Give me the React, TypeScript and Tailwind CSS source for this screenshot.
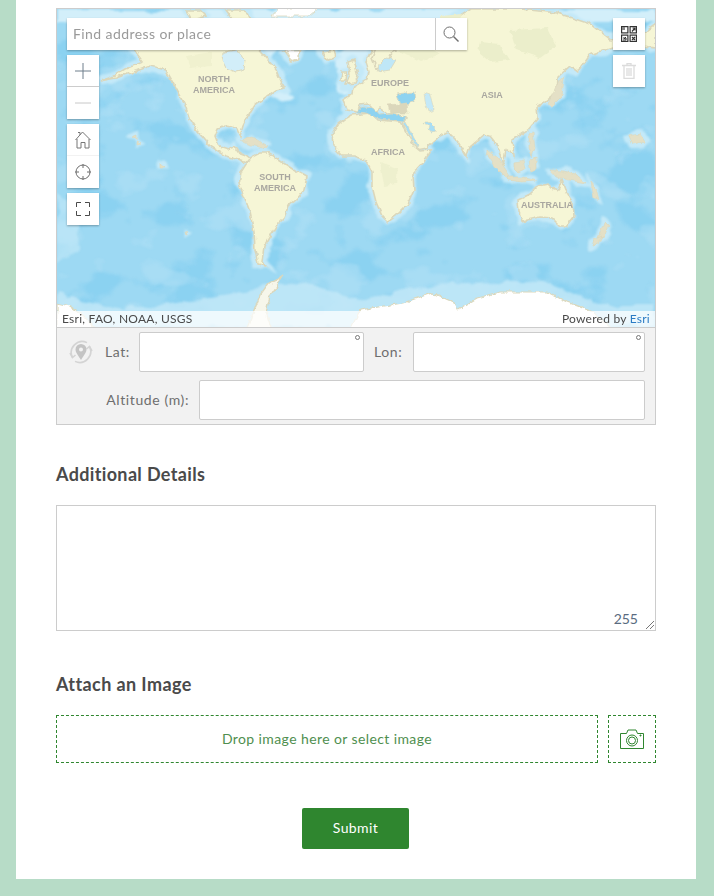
const LAND = "#f6f6d6"
const COAST = "#dbd7bb"
const SHELF = "#c4e9f8"

const continents = [
  // north america
  "M100 81 L112 77 L125 69 L143 62 L134 50 L150 38 L178 32 L186 22 L200 16 L214 30 L232 32 L246 38 L258 48 L268 60 L276 70 L280 80 L285 88 L276 90 L266 97 L254 106 L248 116 L243 126 L240 136 L236 127 L226 125 L218 128 L215 136 L219 146 L228 149 L234 146 L238 152 L246 155 L252 160 L246 163 L238 160 L226 156 L210 146 L198 132 L189 117 L184 102 L174 84 L166 70 L150 66 L134 72 L116 78 Z",
  // south america
  "M250 158 L260 153 L268 153 L282 162 L294 170 L307 177 L304 190 L298 198 L288 207 L284 218 L276 226 L270 236 L264 246 L262 262 L266 266 L258 264 L255 250 L254 232 L250 212 L244 196 L239 184 L241 172 Z",
  // eurasia
  "M343 100 L352 94 L353 88 L367 80 L369 72 L366 62 L372 50 L390 44 L410 40 L426 34 L440 30 L462 14 L470 9 L520 9 L557 13 L590 24 L610 40 L640 36 L656 24 L656 48 L630 44 L613 47 L590 55 L578 72 L570 66 L558 77 L557 93 L545 102 L537 107 L538 118 L528 130 L512 140 L514 156 L506 150 L503 166 L498 146 L490 136 L484 135 L470 147 L467 157 L458 142 L448 132 L440 136 L426 148 L416 150 L408 136 L403 124 L406 118 L396 114 L387 113 L380 108 L376 112 L368 104 L360 105 L358 112 L346 110 Z",
  // africa
  "M345 119 L352 115 L370 113 L378 120 L400 122 L404 128 L414 146 L420 151 L431 150 L424 162 L413 174 L414 190 L408 204 L396 216 L388 222 L382 216 L376 202 L372 186 L372 172 L366 160 L354 156 L342 156 L333 146 L332 134 L338 124 Z",
  // australia
  "M518 200 L530 194 L538 186 L548 184 L552 188 L558 190 L562 180 L566 192 L573 203 L574 216 L566 226 L560 226 L552 218 L540 217 L522 221 L519 212 Z",
  // greenland tip and arctic islands
  "M284 52 L300 50 L297 60 L291 62 Z",
  "M186 10 L200 10 L206 16 L192 20 Z",
  "M226 10 L244 10 L252 22 L238 26 Z",
  // uk and ireland
  "M348 62 L354 60 L358 76 L355 83 L346 84 L350 74 Z",
  "M342 72 L347 72 L346 80 L341 80 Z",
  // iceland
  "M322 52 L334 50 L336 56 L326 60 Z",
  // scandinavia
  "M376 48 L396 40 L404 46 L392 52 L386 66 L376 68 L372 58 Z",
]

const islands = [
  "M488 150 L498 158 L510 176 L505 177 L494 166 L487 156 Z",
  "M507 177 L522 177 L537 181 L522 182 L508 180 Z",
  "M514 162 L523 160 L525 169 L518 172 L514 168 Z",
  "M529 134 L533 132 L535 148 L532 157 L529 148 Z",
  "M529 161 L536 157 L536 169 L531 171 Z",
  "M550 170 L564 171 L578 176 L586 183 L574 181 L556 177 Z",
  "M558 82 L564 78 L562 96 L552 106 L548 104 Z",
  "M591 182 L596 188 L599 200 L594 198 Z",
  "M604 222 L608 226 L604 236 L598 238 Z",
  "M594 240 L602 236 L598 244 L592 246 Z",
  "M628 136 L640 134 L645 142 L632 144 Z",
  "M388 105 L407 103 L408 113 L390 113 Z",
  "M131 137 L136 135 L136 140 Z",
  "M137 141 L141 143 L137 144 Z",
  "M160 164 L165 168 L160 168 Z",
  "M240 140 L252 137 L268 146 L262 148 L248 144 Z",
  "M185 232 L189 233 L186 235 Z",
]

function WorldMap() {
  return (
    <svg viewBox="57 9 598 318" className="block w-full h-[318px]" preserveAspectRatio="none">
      <defs>
        <filter id="rough" x="0" y="0" width="100%" height="100%" colorInterpolationFilters="sRGB">
          <feTurbulence type="fractalNoise" baseFrequency="0.14" numOctaves="3" seed="7" />
          <feDisplacementMap in="SourceGraphic" scale="5" xChannelSelector="R" yChannelSelector="G" />
          <feGaussianBlur stdDeviation="0.35" />
        </filter>
        <filter id="shelf" x="0" y="0" width="100%" height="100%" colorInterpolationFilters="sRGB">
          <feTurbulence type="fractalNoise" baseFrequency="0.05" numOctaves="3" seed="3" />
          <feDisplacementMap in="SourceGraphic" scale="12" xChannelSelector="R" yChannelSelector="G" />
          <feGaussianBlur stdDeviation="1.2" />
        </filter>
        <filter id="deep" x="0" y="0" width="100%" height="100%" colorInterpolationFilters="sRGB">
          <feTurbulence type="fractalNoise" baseFrequency="0.018 0.026" numOctaves="4" seed="11" />
          <feColorMatrix values="0 0 0 0 0.53 0 0 0 0 0.81 0 0 0 0 0.94 6 0 0 0 -3.1" />
          <feComponentTransfer>
            <feFuncA type="discrete" tableValues="0 0.3 0.55 0.8" />
          </feComponentTransfer>
          <feGaussianBlur stdDeviation="0.8" />
        </filter>
        <filter id="pale" x="0" y="0" width="100%" height="100%" colorInterpolationFilters="sRGB">
          <feTurbulence type="fractalNoise" baseFrequency="0.022 0.03" numOctaves="4" seed="23" />
          <feColorMatrix values="0 0 0 0 0.71 0 0 0 0 0.89 0 0 0 0 0.97 6 0 0 0 -3.3" />
          <feComponentTransfer>
            <feFuncA type="discrete" tableValues="0 0.25 0.45" />
          </feComponentTransfer>
          <feGaussianBlur stdDeviation="0.8" />
        </filter>
      </defs>
      <rect x="57" y="9" width="598" height="318" fill="#9dd9f3" />
      <rect x="57" y="9" width="598" height="318" filter="url(#deep)" />
      <rect x="57" y="9" width="598" height="318" filter="url(#pale)" />

      {/* pale water near the poles and around the land */}
      <g filter="url(#shelf)">
        <path d="M57 9 H656 V22 H300 L270 60 L240 24 H57 Z" fill="#d3effa" />
        <path d="M57 190 L80 215 L78 250 L57 262 Z" fill={SHELF} opacity="0.6" />
        <path d="M57 295 L120 310 L200 300 L250 290 L290 282 L360 300 L430 284 L500 282 L550 282 L600 305 L656 305 V327 H57 Z" fill={SHELF} opacity="0.8" />
        <path d="M280 84 L294 98 L278 100 L268 92 Z" fill="#d3effa" />
        <path d="M356 44 L372 44 L370 80 L352 92 L338 90 L336 56 Z" fill="#d3effa" />
        {continents.map((d, i) => (
          <path key={i} d={d} fill={SHELF} stroke={SHELF} strokeWidth="7" />
        ))}
        {islands.map((d, i) => (
          <path key={i} d={d} fill={SHELF} stroke={SHELF} strokeWidth="5" />
        ))}
      </g>

      <g filter="url(#rough)">
        {continents.map((d, i) => (
          <path key={i} d={d} fill={LAND} stroke={COAST} strokeWidth="1.6" />
        ))}
        {/* hudson bay */}
        <path d="M223 52 L236 50 L245 60 L244 70 L236 72 L226 68 L222 60 Z" fill="#d2eef9" stroke={COAST} />
        {/* inland seas */}
        <path d="M356 112 L362 107 L374 108 L380 115 L392 114 L404 116 L404 122 L380 119 L366 113 Z" fill="#8ed3f1" stroke={COAST} strokeWidth="0.8" />
        <path d="M396 94 L414 92 L415 102 L400 105 Z" fill="#8ed3f1" stroke={COAST} strokeWidth="0.8" />
        <path d="M424 92 L430 94 L434 110 L428 112 L425 102 Z" fill="#c4e9f8" stroke={COAST} strokeWidth="0.6" />
        <path d="M386 58 L396 60 L390 70 L378 72 L380 64 Z" fill="#bfe7f7" stroke={COAST} strokeWidth="0.8" />
        <path d="M404 124 L406 122 L418 146 L416 147 Z" fill="#a9def4" stroke={COAST} strokeWidth="0.6" />
        <path d="M424 122 L428 122 L437 131 L432 132 Z" fill="#a9def4" stroke={COAST} strokeWidth="0.6" />
        {/* greener land */}
        <path d="M480 42 L500 44 L510 60 L490 62 L478 52 Z" fill="#ebeecb" />
        <path d="M510 30 L548 28 L556 46 L540 58 L516 50 Z" fill="#ebeecb" />
        <path d="M395 48 L420 44 L440 54 L420 62 Z" fill="#eef0ce" />
        <path d="M440 16 L462 14 L456 28 L440 28 Z" fill="#ebeecb" />
        <path d="M186 56 L212 52 L212 66 L190 68 Z" fill="#f0f1cf" />
        <path d="M380 162 L398 168 L396 184 L384 186 Z" fill="#eef0ce" />
        {islands.map((d, i) => (
          <path key={i} d={d} fill={i === 11 ? COAST : "#e4e0c6"} stroke={COAST} strokeWidth="0.6" />
        ))}
        {/* greenland */}
        <path d="M278 8 L320 8 L310 16 L272 16 Z" fill="#ffffff" stroke={COAST} strokeWidth="0.8" />
        <path d="M285 50 L300 50 L297 59 L291 61 Z" fill="#ffffff" stroke={COAST} strokeWidth="0.8" />
        {/* antarctica */}
        <path d="M283 277 L268 284 L260 295 L254 311 L246 330 L272 330 L266 312 L270 296 Z" fill="#f6f6ea" stroke={COAST} strokeWidth="1.4" />
        <path d="M350 330 L360 310 L403 303 L432 293 L453 302 L457 310 L477 298 L500 292 L547 292 L567 302 L593 312 L612 330 Z" fill="#ffffff" stroke={COAST} strokeWidth="1.2" />
        <path d="M57 303 L70 306 L84 316 L96 330 L57 330 Z" fill="#ffffff" stroke={COAST} strokeWidth="1.2" />
      </g>

      <g className="font-['Liberation_Sans',sans-serif] font-bold" fill="#a9a7a0" fontSize="9" textAnchor="middle">
        <text x="214" y="82">NORTH</text>
        <text x="214" y="93">AMERICA</text>
        <text x="275" y="180">SOUTH</text>
        <text x="275" y="191">AMERICA</text>
        <text x="390" y="86">EUROPE</text>
        <text x="492" y="98">ASIA</text>
        <text x="388" y="155">AFRICA</text>
        <text x="547" y="208">AUSTRALIA</text>
      </g>
    </svg>
  )
}

function MapButton({ children, className = "" }: { children: React.ReactNode; className?: string }) {
  return <div className={`w-8 h-8 bg-white flex items-center justify-center ${className}`}>{children}</div>
}

function MapControls() {
  return (
    <>
      <div className="absolute left-[10px] top-[9px] flex h-8 w-[400px] bg-white shadow-[0_1px_2px_rgba(0,0,0,0.3)]">
        <div className="flex-1 pl-[6px] text-[14px] leading-8 tracking-[0.42px] text-[#9a9a9a]">Find address or place</div>
        <div className="w-8 flex items-center justify-center border-l border-[#ccc]">
          <svg width="16" height="16" viewBox="0 0 16 16" fill="none" stroke="#6e6e6e" className="mr-[2px]">
            <circle cx="6.5" cy="6.5" r="5.5" />
            <path d="M10.5 10.5 L15.5 15.5" strokeWidth="1.4" />
          </svg>
        </div>
      </div>

      <div className="absolute left-[10px] top-[46px] flex flex-col gap-[5px]">
        <div className="shadow-[0_1px_2px_rgba(0,0,0,0.3)]">
          <MapButton className="border-b border-[#ccc]">
            <svg width="16" height="16" viewBox="0 0 16 16" stroke="#6e7f8c">
              <path d="M0 8 H16 M8 0 V16" />
            </svg>
          </MapButton>
          <MapButton>
            <svg width="16" height="16" viewBox="0 0 16 16" stroke="#c8c8c8">
              <path d="M0 8 H16" />
            </svg>
          </MapButton>
        </div>
        <div className="shadow-[0_1px_2px_rgba(0,0,0,0.3)]">
          <MapButton className="border-b border-[#f2f2f2]">
            <svg width="16" height="18" viewBox="0 0 16 18" fill="none" stroke="#777">
              <path d="M0.5 9 L7.5 1 L15.5 9 M3 1.5 H5 V4 M2 8 V17 H6 V11.5 H10 V17 H14 V8" />
            </svg>
          </MapButton>
          <MapButton>
            <svg width="16" height="16" viewBox="0 0 16 16" fill="none" stroke="#6e6e6e">
              <circle cx="8" cy="8" r="7" />
              <path d="M8 0 V4 M8 12 V16 M0 8 H4 M12 8 H16" />
            </svg>
          </MapButton>
        </div>
        <div className="shadow-[0_1px_2px_rgba(0,0,0,0.3)]">
          <MapButton>
            <svg width="14" height="14" viewBox="0 0 14 14" fill="none" stroke="#4a4a4a">
              <path d="M0.5 5 V0.5 H5 M9 0.5 H13.5 V5 M13.5 9 V13.5 H9 M5 13.5 H0.5 V9" />
            </svg>
          </MapButton>
        </div>
      </div>

      <div className="absolute right-[10px] top-[9px] flex flex-col gap-[5px]">
        <MapButton className="shadow-[0_1px_2px_rgba(0,0,0,0.3)]">
          <svg width="16" height="16" viewBox="0 0 16 16" fill="none" stroke="#333" strokeWidth="1.2">
            <rect x="0.6" y="0.6" width="6.3" height="6.3" />
            <rect x="9.1" y="0.6" width="6.3" height="6.3" />
            <rect x="0.6" y="9.1" width="6.3" height="6.3" />
            <rect x="9.1" y="9.1" width="6.3" height="6.3" />
            <path d="M1 1 H4 V4 H1 Z" fill="#888" stroke="none" />
            <path d="M11 5.5 L14 2 M11.5 2 H14 V4.5" />
            <path d="M2 12 H5 V14 H2 M5 11 L3 13" strokeWidth="1" />
            <path d="M11 11 L14 14 M14 11 L11 14" />
          </svg>
        </MapButton>
        <MapButton className="shadow-[0_1px_2px_rgba(0,0,0,0.3)]">
          <svg width="14" height="16" viewBox="0 0 14 16" fill="none" stroke="#dcdcdc" strokeWidth="1.3">
            <path d="M0 2.5 H14 M5 2.5 V0.7 H9 V2.5 M2 2.5 V15.3 H12 V2.5 M5 5 V13 M7 5 V13 M9 5 V13" />
          </svg>
        </MapButton>
      </div>

      <div className="absolute inset-x-0 bottom-0 flex h-4 items-center justify-between bg-white/75 px-[5px] text-[12px] leading-4 tracking-[0.25px] text-[#4a4a4a]">
        <span>Esri, FAO, NOAA, USGS</span>
        <span>
          Powered by <span className="text-[#2b7bc4]">Esri</span>
        </span>
      </div>
    </>
  )
}

function CoordInput({ className = "", degree = false }: { className?: string; degree?: boolean }) {
  return (
    <div className={`relative h-10 rounded-[2px] border border-[#ccc] bg-white ${className}`}>
      {degree && <span className="absolute right-[3px] top-[2px] h-[5px] w-[5px] rounded-full border border-[#777]" />}
    </div>
  )
}

export default function App() {
  return (
    <div className="min-h-[896px] bg-[#b7dcc7] pl-4 pr-[18px] pb-[17px] font-['Lato',sans-serif] text-[#4a4a4a]">
      <div className="h-[879px] bg-white px-10 pt-2">
        <div className="border border-[#ccc]">
          <div className="relative h-[318px] overflow-hidden">
            <WorldMap />
            <MapControls />
          </div>
          <div className="flex flex-col gap-2 border-t border-[#ccc] bg-[#f2f2f2] px-[10px] pt-1 pb-1 text-[14px] tracking-[0.6px] text-[#6e6e6e]">
            <div className="flex h-10 items-center">
              <svg width="24" height="24" viewBox="0 0 24 24" fill="none" stroke="#d4d4d4" strokeWidth="1.6" className="ml-[2px]">
                <path d="M3.5 17.5 A11 11 0 0 1 18 2.6 M20.5 6.5 A11 11 0 0 1 6 21.4" />
                <path d="M1 13 L3.5 17.5 L6.5 15 M23 11 L20.5 6.5 L17.5 9" />
                <path d="M12 20 C9 15 6.5 12.5 6.5 9.5 A5.5 5.5 0 0 1 17.5 9.5 C17.5 12.5 15 15 12 20 Z M12 7.5 A2 2 0 1 0 12 11.5 A2 2 0 1 0 12 7.5 Z" fill="#c4c4c4" stroke="none" fillRule="evenodd" />
              </svg>
              <label className="ml-3 w-[34px] pb-[2px]">Lat:</label>
              <CoordInput degree className="w-[225px]" />
              <label className="ml-[10px] w-[39px] pb-[2px]">Lon:</label>
              <CoordInput degree className="w-[232px]" />
            </div>
            <div className="flex items-center justify-end">
              <label className="mr-[10px] pb-[2px]">Altitude (m):</label>
              <CoordInput className="w-[446px]" />
            </div>
          </div>
        </div>

        <h3 className="mt-[37px] text-[18px] font-bold leading-6 tracking-[0.35px]">Additional Details</h3>
        <div className="relative mt-[19px] h-[126px] border border-[#ccc]">
          <span className="absolute bottom-[3px] right-[17px] text-[14px] leading-4 text-[#5a6b80]">255</span>
          <svg width="10" height="10" viewBox="0 0 10 10" stroke="#777" className="absolute bottom-0 right-0">
            <path d="M1 9 L9 1 M5 9 L9 5" />
          </svg>
        </div>

        <h3 className="mt-[41px] text-[18px] font-bold leading-6 tracking-[0.4px]">Attach an Image</h3>
        <div className="mt-[19px] flex gap-[10px]">
          <div className="flex h-12 flex-1 items-center justify-center border border-dashed border-[#2f862f] pb-[2px] text-[14px] tracking-[0.4px] text-[#4f8f4f]">
            Drop image here or select image
          </div>
          <div className="flex h-12 w-12 items-center justify-center border border-dashed border-[#2f862f]">
            <svg width="24" height="20" viewBox="0 0 24 20" fill="none" stroke="#2f862f">
              <path d="M0.5 4.5 H6.5 L8 1 H16 L17.5 4.5 H23.5 V19.5 H0.5 Z" />
              <circle cx="12" cy="11.5" r="5.5" />
              <circle cx="12" cy="11.5" r="3.5" />
              <circle cx="20.5" cy="6.5" r="0.6" fill="#2f862f" />
            </svg>
          </div>
        </div>

        <div className="mt-[45px] flex justify-center pr-px">
          <button className="h-[41px] w-[107px] rounded-[2px] bg-[#2f862f] pb-[2px] text-[14px] tracking-[0.4px] text-white">Submit</button>
        </div>
      </div>
    </div>
  )
}
